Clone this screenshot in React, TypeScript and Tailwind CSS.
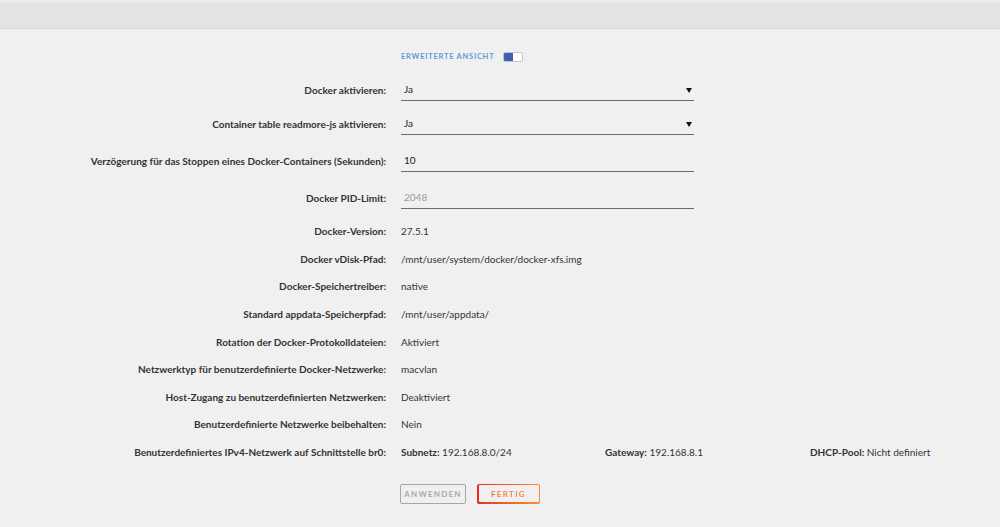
const LABEL_W = 'w-[401px] shrink-0 pr-[15px] text-right font-bold text-[#333]';

function InputRow({ label, value, select, placeholder, mt }: { label: string; value: string; select?: boolean; placeholder?: boolean; mt: string }) {
  return (
    <div className={`flex h-[22px] items-center ${mt}`}>
      <div className={LABEL_W}>{label}</div>
      <div className="flex h-full w-[293px] items-center justify-between border-b border-[#6b6b6b] pl-[3px] pr-[2px]">
        <span className={placeholder ? 'text-[#9a9a9a]' : 'text-[#222]'}>{value}</span>
        {select && (
          <svg width="6" height="5" viewBox="0 0 6 5" className="mt-[1px]">
            <path d="M0 0 H6 L3 5 Z" fill="#111" />
          </svg>
        )}
      </div>
    </div>
  );
}

function TextRow({ label, children }: { label: string; children: React.ReactNode }) {
  return (
    <div className="flex h-[27.6px] items-center">
      <div className={LABEL_W}>{label}</div>
      <div className="text-[#333]">{children}</div>
    </div>
  );
}

export default function App() {
  const rows: [string, string][] = [
    ['Docker-Version:', '27.5.1'],
    ['Docker vDisk-Pfad:', '/mnt/user/system/docker/docker-xfs.img'],
    ['Docker-Speichertreiber:', 'native'],
    ['Standard appdata-Speicherpfad:', '/mnt/user/appdata/'],
    ['Rotation der Docker-Protokolldateien:', 'Aktiviert'],
    ['Netzwerktyp für benutzerdefinierte Docker-Netzwerke:', 'macvlan'],
    ['Host-Zugang zu benutzerdefinierten Netzwerken:', 'Deaktiviert'],
    ['Benutzerdefinierte Netzwerke beibehalten:', 'Nein'],
  ];

  return (
    <div className="min-h-[527px] w-[1000px] bg-[#f0f0f0] font-['Lato',sans-serif] text-[10px]">
      {/* title bar */}
      <div className="h-[29px] border-t-[3px] border-b border-t-[#ececec] border-b-[#d6d6d6] bg-[#e4e4e4]" />

      {/* advanced view toggle */}
      <div className="mt-[23px] flex h-[10px] items-center pl-[401px]">
        <span className="text-[7.5px] font-bold tracking-[0.75px] text-[#5b9bd5]">ERWEITERTE ANSICHT</span>
        <div className="ml-[9px] flex h-[10px] w-[20px] overflow-hidden rounded-[2px] border border-[#c4c4c4] bg-white">
          <div className="h-full w-[9px] bg-[#3e5fb4]" />
        </div>
      </div>

      <InputRow label="Docker aktivieren:" value="Ja" select mt="mt-[17px]" />
      <InputRow label="Container table readmore-js aktivieren:" value="Ja" select mt="mt-[12px]" />
      <InputRow label="Verzögerung für das Stoppen eines Docker-Containers (Sekunden):" value="10" mt="mt-[15px]" />
      <InputRow label="Docker PID-Limit:" value="2048" placeholder mt="mt-[15px]" />

      <div className="mt-[9px]">
        {rows.map(([l, v]) => (
          <TextRow key={l} label={l}>{v}</TextRow>
        ))}
        <TextRow label="Benutzerdefiniertes IPv4-Netzwerk auf Schnittstelle br0:">
          <div className="flex">
            <span className="w-[204px]"><b className="text-[#333]">Subnetz:</b> 192.168.8.0/24</span>
            <span className="w-[205px]"><b className="text-[#333]">Gateway:</b> 192.168.8.1</span>
            <span><b className="text-[#333]">DHCP-Pool:</b> Nicht definiert</span>
          </div>
        </TextRow>
      </div>

      {/* buttons */}
      <div className="mt-[17.5px] flex gap-[11px] pl-[400px]">
        <button className="h-[20px] w-[66px] rounded-[2px] border-[1.5px] border-[#a6a6a6] text-[8px] font-bold tracking-[1.2px] text-[#aaaaaa]">
          ANWENDEN
        </button>
        <div className="h-[20px] w-[63px] rounded-[2px] bg-gradient-to-r from-[#e22828] to-[#ff8c2f] p-[1.5px]">
          <button className="flex h-full w-full items-center justify-center rounded-[1px] bg-[#f0f0f0] text-[8px] font-bold tracking-[1.3px]">
            <span className="bg-gradient-to-r from-[#f4703a] to-[#ff8c2f] bg-clip-text text-transparent">FERTIG</span>
          </button>
        </div>
      </div>
    </div>
  );
}
